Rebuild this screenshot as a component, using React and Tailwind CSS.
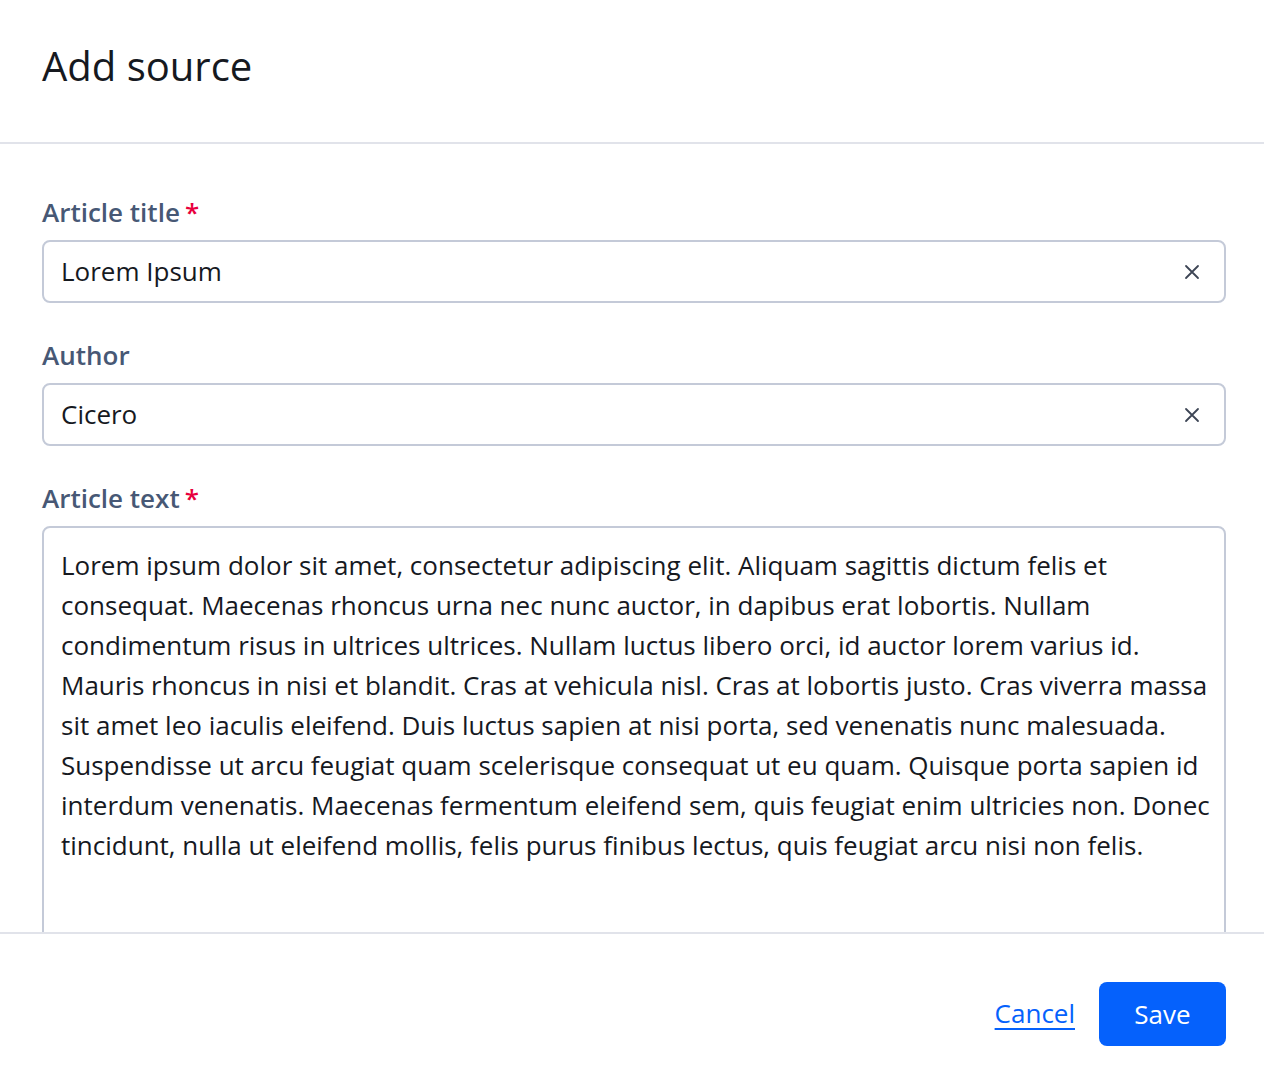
import React from "react";

const X = () => (
  <svg width="16" height="16" viewBox="0 0 16 16" className="shrink-0">
    <path d="M2 2L14 14M14 2L2 14" stroke="#3d4555" strokeWidth="1.8" strokeLinecap="round" />
  </svg>
);

const Label = ({ children, req }) => (
  <div className="flex items-center h-[40px] text-[26px] font-semibold text-[#475875]">
    {children}
    {req && <span className="text-[#e8003d] ml-[5px]">*</span>}
  </div>
);

const Input = ({ value }) => (
  <div className="mt-[8px] h-[63px] border-2 border-[#c4cad8] rounded-[8px] flex items-center pl-[17px] pr-[24px] justify-between">
    <span className="text-[26px] text-[#16191f]">{value}</span>
    <X />
  </div>
);

export default function App() {
  return (
    <div className="h-[1082px] flex flex-col bg-white" style={{ fontFamily: '"Open Sans", "Noto Sans", sans-serif' }}>
      <div className="h-[144px] shrink-0 border-b-2 border-[#e1e3ea] flex items-center px-[42px]">
        <h1 className="text-[40px] text-[#16191f] -mt-[10px]">Add source</h1>
      </div>
      <div className="flex-1 overflow-hidden pl-[42px] pr-[38px] pt-[48px]">
        <Label req>Article title</Label>
        <Input value="Lorem Ipsum" />
        <div className="h-[32px]" />
        <Label>Author</Label>
        <Input value="Cicero" />
        <div className="h-[32px]" />
        <Label req>Article text</Label>
        <div className="mt-[8px] h-[500px] border-2 border-[#c4cad8] rounded-[8px] pl-[17px] pr-[14px] pt-[17px] text-[26px] leading-[40px] text-[#16191f]">
          Lorem ipsum dolor sit amet, consectetur adipiscing elit. Aliquam sagittis dictum felis et consequat. Maecenas rhoncus urna nec nunc auctor, in dapibus erat lobortis. Nullam condimentum risus in ultrices ultrices. Nullam luctus libero orci, id auctor lorem varius id. Mauris rhoncus in nisi et blandit. Cras at vehicula nisl. Cras at lobortis justo. Cras viverra massa sit amet leo iaculis eleifend. Duis luctus sapien at nisi porta, sed venenatis nunc malesuada. Suspendisse ut arcu feugiat quam scelerisque consequat ut eu quam. Quisque porta sapien id interdum venenatis. Maecenas fermentum eleifend sem, quis feugiat enim ultricies non. Donec tincidunt, nulla ut eleifend mollis, felis purus finibus lectus, quis feugiat arcu nisi non felis.
        </div>
      </div>
      <div className="h-[150px] shrink-0 border-t-2 border-[#e1e3ea] flex items-start justify-end px-[38px] pt-[48px] gap-[24px]">
        <a className="h-[63px] flex items-center text-[26px] text-[#0561fc] underline underline-offset-[5px]">Cancel</a>
        <button className="h-[64px] w-[127px] rounded-[8px] bg-[#0561fc] text-white text-[26px] font-medium">Save</button>
      </div>
    </div>
  );
}
